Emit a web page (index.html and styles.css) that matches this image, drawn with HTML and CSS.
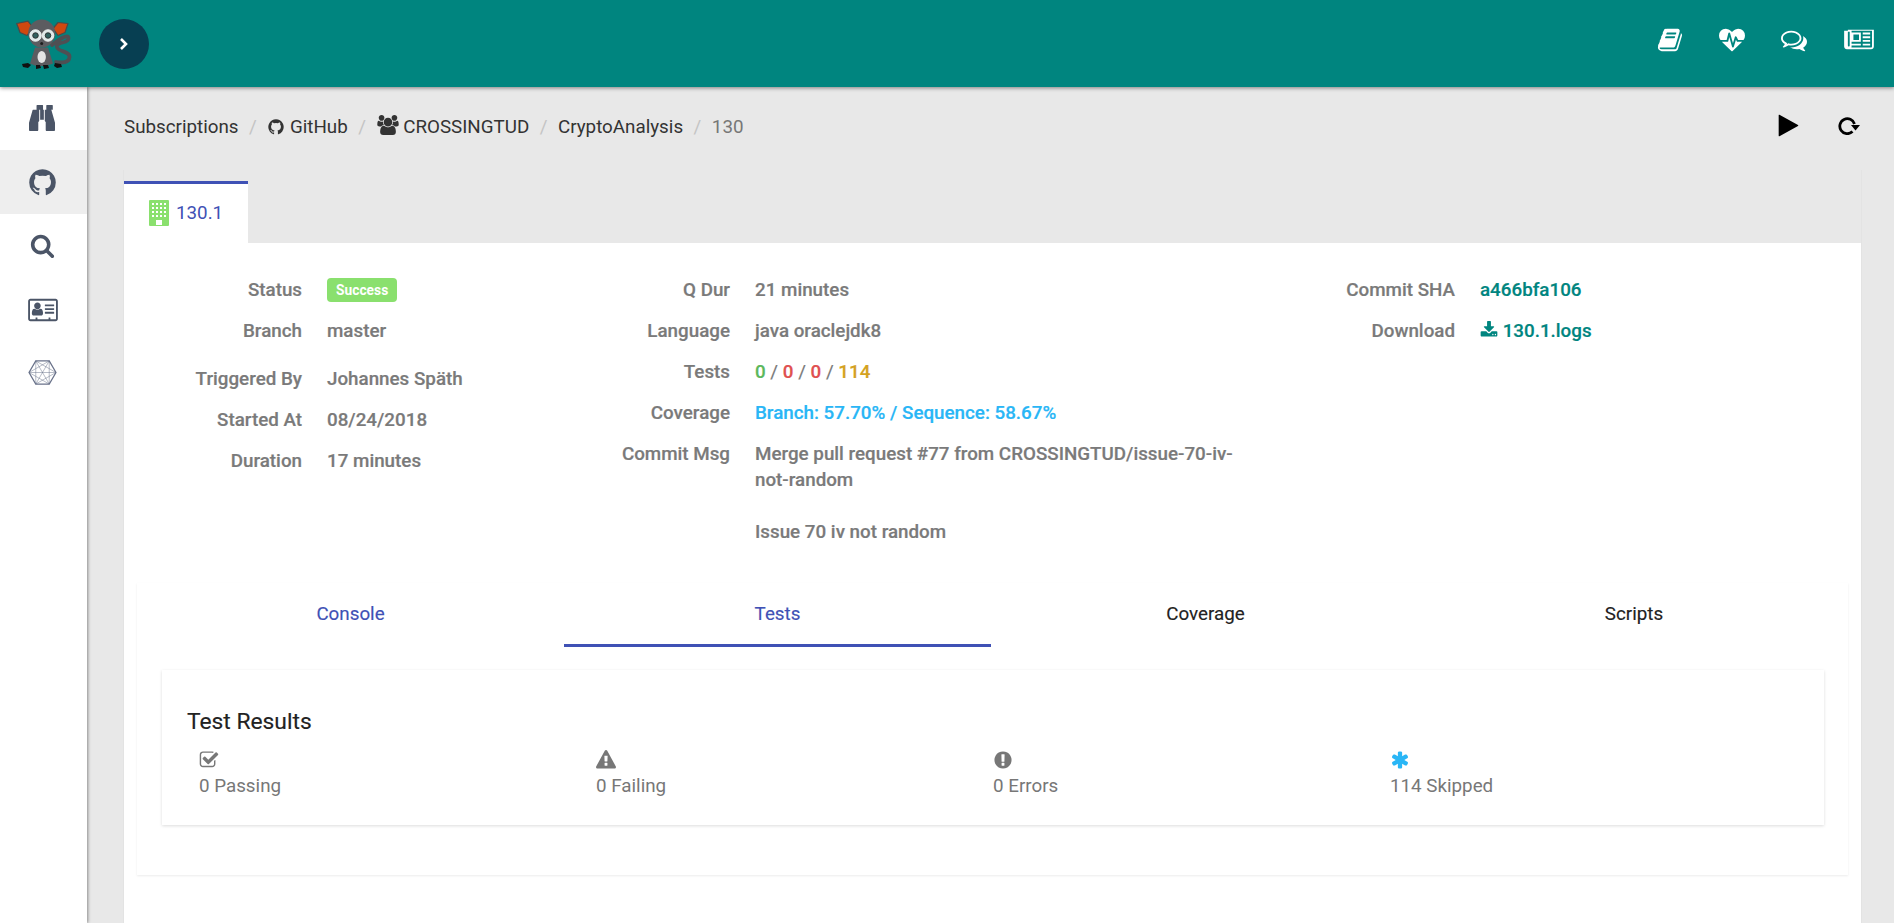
FILE: index.html
```html
<!DOCTYPE html>
<html lang="en">
<head>
<meta charset="utf-8">
<title>130.1</title>
<link rel="stylesheet" href="styles.css">
</head>
<body>
<svg class="defs" aria-hidden="true">
  <symbol id="i-github" viewBox="0 0 1792 1792"><path d="M896 128q209 0 385.5 103t279.5 279.5 103 385.5q0 251-146.5 451.5t-378.5 277.5q-27 5-40-7t-13-30q0-3 .5-76.5t.5-134.5q0-97-52-142 57-6 102.5-18t94-39 81-66.5 53-105 20.5-150.5q0-119-79-206 37-91-8-204-28-9-81 11t-92 44l-38 24q-93-26-192-26t-192 26q-16-11-42.5-27t-83.5-38.5-85-13.5q-45 113-8 204-79 87-79 206 0 85 20.5 150t52.5 105 80.5 67 94 39 102.5 18q-39 36-49 103-21 10-45 15t-57 5-65.5-21.5-55.5-62.5q-19-32-48.5-52t-49.5-24l-20-3q-21 0-29 4.5t-5 11.5 9 14 13 12l7 5q22 10 43.5 38t31.5 51l10 23q13 38 44 61.5t67 30 69.5 7 55.5-3.5l23-4q0 38 .5 88.5t.5 54.5q0 18-13 30t-40 7q-232-77-378.5-277.5t-146.5-451.5q0-209 103-385.5t279.5-279.5 385.5-103z"/></symbol>
  <symbol id="i-users" viewBox="0 0 1920 1792"><path d="M593 896q-162 5-265 128h-134q-82 0-138-40.5t-56-118.5q0-353 124-353 6 0 43.5 21t97.5 42.5 119 21.5q67 0 133-23-5 37-5 66 0 139 81 256zm1071 637q0 120-73 189.5t-194 69.5h-874q-121 0-194-69.5t-73-189.5q0-53 3.5-103.5t14-109 26.5-108.5 43-97.5 62-81 85.5-53.5 111.5-20q10 0 43 21.5t73 48 107 48 135 21.5 135-21.5 107-48 73-48 43-21.5q61 0 111.5 20t85.5 53.5 62 81 43 97.5 26.5 108.5 14 109 3.5 103.5zm-1024-1277q0 106-75 181t-181 75-181-75-75-181 75-181 181-75 181 75 75 181zm704 384q0 159-112.5 271.5t-271.5 112.5-271.5-112.5-112.5-271.5 112.5-271.5 271.5-112.5 271.5 112.5 112.5 271.5zm576 225q0 78-56 118.5t-138 40.5h-134q-103-123-265-128 81-117 81-256 0-29-5-66 66 23 133 23 59 0 119-21.5t97.5-42.5 43.5-21q124 0 124 353zm-128-609q0 106-75 181t-181 75-181-75-75-181 75-181 181-75 181 75 75 181z"/></symbol>
  <symbol id="i-binoculars" viewBox="0 0 1792 1792"><path d="M704 320v768q0 26-19 45t-45 19v576q0 26-19 45t-45 19h-512q-26 0-45-19t-19-45v-512l249-873q7-23 31-23h424zm320 0v704h-256v-704h256zm768 896v512q0 26-19 45t-45 19h-512q-26 0-45-19t-19-45v-576q-26 0-45-19t-19-45v-768h424q24 0 31 23zm-824-1184v288h-448v-288q0-14 9-23t23-9h384q14 0 23 9t9 23zm672 0v288h-448v-288q0-14 9-23t23-9h384q14 0 23 9t9 23z"/></symbol>
  <symbol id="i-search" viewBox="0 0 1792 1792"><path d="M1216 832q0-185-131.5-316.5t-316.5-131.5-316.5 131.5-131.5 316.5 131.5 316.5 316.5 131.5 316.5-131.5 131.5-316.5zm512 832q0 52-38 90t-90 38q-54 0-90-38l-343-342q-179 124-399 124-143 0-273.5-55.5t-225-150-150-225-55.5-273.5 55.5-273.5 150-225 225-150 273.5-55.5 273.5 55.5 225 150 150 225 55.5 273.5q0 220-124 399l343 343q37 37 37 90z"/></symbol>
  <symbol id="i-card" viewBox="0 0 2048 1792"><path d="M1024 1131q0 64-37 106.5t-91 42.5h-512q-54 0-91-42.5t-37-106.5 9-117.5 29.5-103 60.5-78 97-28.5q6 4 30 18t37.5 21.5 35.5 17.5 43 14.5 42 4.5 42-4.5 43-14.5 35.5-17.5 37.5-21.5 30-18q57 0 97 28.5t60.5 78 29.5 103 9 117.5zm-157-520q0 94-66.5 160.5t-160.5 66.5-160.5-66.5-66.5-160.5 66.5-160.5 160.5-66.5 160.5 66.5 66.5 160.5zm925 445v64q0 14-9 23t-23 9h-576q-14 0-23-9t-9-23v-64q0-14 9-23t23-9h576q14 0 23 9t9 23zm0-252v56q0 15-10.5 25.5t-25.5 10.5h-568q-15 0-25.5-10.5t-10.5-25.5v-56q0-15 10.5-25.5t25.5-10.5h568q15 0 25.5 10.5t10.5 25.5zm0-260v64q0 14-9 23t-23 9h-576q-14 0-23-9t-9-23v-64q0-14 9-23t23-9h576q14 0 23 9t9 23zm128 960v-1216q0-13-9.5-22.5t-22.5-9.5h-1728q-13 0-22.5 9.5t-9.5 22.5v1216q0 13 9.5 22.5t22.5 9.5h352v-96q0-14 9-23t23-9h64q14 0 23 9t9 23v96h768v-96q0-14 9-23t23-9h64q14 0 23 9t9 23v96h352q13 0 22.5-9.5t9.5-22.5zm128-1216v1216q0 66-47 113t-113 47h-1728q-66 0-113-47t-47-113v-1216q0-66 47-113t113-47h1728q66 0 113 47t47 113z"/></symbol>
  <symbol id="i-book" viewBox="0 0 1792 1792"><path d="M1703 478q40 57 18 129l-275 906q-19 64-76.5 107.5t-122.5 43.5h-923q-77 0-148.5-53.5t-99.5-131.5q-24-67-2-127 0-4 3-27t4-37q1-8-3-21.5t-3-19.5q2-11 8-21t16.5-23.5 16.5-23.5q23-38 45-91.5t30-91.5q3-10 .5-30t-.5-28q3-11 17-28t17-23q21-36 42-92t25-90q1-9-2.5-32t.5-28q4-13 22-30.5t22-22.5q19-26 42.5-84.5t27.5-96.5q1-8-3-25.5t-2-26.5q2-8 9-18t18-23 17-21q8-12 16.5-30.5t15-35 16-36 19.5-32 26.5-23.5 36-11.5 47.5 5.5l-1 3q38-9 51-9h761q74 0 114 56t18 130l-274 906q-36 119-71.5 153.5t-128.5 34.5h-869q-27 0-38 15-11 16-1 43 24 70 144 70h923q29 0 56-15.5t35-41.5l300-987q7-22 5-57 38 15 59 43zm-1064 2q-4 13 2 22.5t20 9.5h608q13 0 25.5-9.5t16.5-22.5l21-64q4-13-2-22.5t-20-9.5h-608q-13 0-25.5 9.5t-16.5 22.5zm-83 256q-4 13 2 22.5t20 9.5h608q13 0 25.5-9.5t16.5-22.5l21-64q4-13-2-22.5t-20-9.5h-608q-13 0-25.5 9.5t-16.5 22.5z"/></symbol>
  <symbol id="i-heart" viewBox="0 0 1792 1792"><path d="M1280 1024h305q-5 6-10 10.5t-9 7.5l-3 4-623 600q-18 18-44 18t-44-18l-624-602q-5-2-21-20h369q22 0 39.5-13.5t22.5-34.5l70-281 190 667q6 20 23 33t39 13q21 0 38-13t23-33l146-485 56 112q18 35 57 35zm512-428q0 145-103 300h-369l-111-221q-8-17-25.5-27t-36.5-8q-45 5-56 46l-129 430-196-686q-6-20-23.5-33t-39.5-13-39 13.5-22 34.5l-116 464h-423q-103-155-103-300 0-220 127-344t351-124q62 0 126.5 21.5t120 58 95.5 68.5 76 68q36-36 76-68t95.5-68.5 120-58 126.5-21.5q224 0 351 124t127 344z"/></symbol>
  <symbol id="i-comments" viewBox="0 0 1792 1792"><path d="M704 384q-153 0-286 52t-211.5 141-78.5 191q0 82 53 158t149 132l97 56-35 84q34-20 62-39l44-31 53 10q78 14 153 14 153 0 286-52t211.5-141 78.5-191-78.5-191-211.5-141-286-52zm0-128q191 0 353.5 68.5t256.5 186.5 94 257-94 257-256.5 186.5-353.5 68.5q-86 0-176-16-124 88-278 128-36 9-86 16h-3q-11 0-20.5-8t-11.5-21q-1-3-1-6.5t.5-6.5 2-6l2.5-5 3.5-5.5 4-5 4.5-5 4-4.5q5-6 23-25t26-29.5 22.5-29 25-38.5 20.5-44q-124-72-195-177t-71-224q0-139 94-257t256.5-186.5 353.5-68.5zm822 1169q10 24 20.5 44t25 38.5 22.5 29 26 29.5 23 25q1 1 4 4.5t4.5 5 4 5 3.5 5.5l2.5 5 2 6 .5 6.5-1 6.5q-3 14-13 22t-22 7q-50-7-86-16-154-40-278-128-90 16-176 16-271 0-472-132 58 4 88 4 161 0 309-45t264-129q125-92 192-212t67-254q0-77-23-152 129 71 204 178t75 230q0 120-71 224.5t-195 176.5z"/></symbol>
  <symbol id="i-news" viewBox="0 0 2048 1792"><path d="M1024 512h-384v384h384v-384zm128 640v128h-640v-128h640zm0-768v640h-640v-640h640zm640 768v128h-512v-128h512zm0-256v128h-512v-128h512zm0-256v128h-512v-128h512zm0-256v128h-512v-128h512zm128 960v-1088h-1408v1088q0 33-11 64h1355q26 0 45-19t19-45zm-1536-64v-960h-128v960q0 26 19 45t45 19 45-19 19-45zm1664-1088v1152q0 80-56 136t-136 56h-1664q-80 0-136-56t-56-136v-1088h256v-64h1536z"/></symbol>
  <symbol id="i-play" viewBox="0 0 1792 1792"><path d="M1576 927l-1328 738q-23 13-39.5 3t-16.5-36v-1472q0-26 16.5-36t39.5 3l1328 738q23 13 23 31t-23 31z"/></symbol>
  <symbol id="i-download" viewBox="0 0 1792 1792"><path d="M1344 1344q0-26-19-45t-45-19-45 19-19 45 19 45 45 19 45-19 19-45zm256 0q0-26-19-45t-45-19-45 19-19 45 19 45 45 19 45-19 19-45zm128-224v320q0 40-28 68t-68 28h-1472q-40 0-68-28t-28-68v-320q0-40 28-68t68-28h465l135 136q58 56 136 56t136-56l136-136h464q40 0 68 28t28 68zm-325-569q17 41-14 70l-448 448q-18 19-45 19t-45-19l-448-448q-31-29-14-70 17-39 59-39h256v-448q0-26 19-45t45-19h256q26 0 45 19t19 45v448h256q42 0 59 39z"/></symbol>
  <symbol id="i-check" viewBox="0 0 1792 1792"><path d="M1472 930v318q0 119-84.5 203.5t-203.5 84.5h-832q-119 0-203.5-84.5t-84.5-203.5v-832q0-119 84.5-203.5t203.5-84.5h832q63 0 117 25 15 7 18 23 3 17-9 29l-49 49q-10 10-23 10-3 0-9-2-23-6-45-6h-832q-66 0-113 47t-47 113v832q0 66 47 113t113 47h832q66 0 113-47t47-113v-254q0-13 9-22l64-64q10-10 23-10 6 0 12 3 20 8 20 29zm231-489l-814 814q-24 24-57 24t-57-24l-430-430q-24-24-24-57t24-57l110-110q24-24 57-24t57 24l263 263 647-647q24-24 57-24t57 24l110 110q24 24 24 57t-24 57z"/></symbol>
  <symbol id="i-warning" viewBox="0 0 1792 1792"><path d="M1024 1375v-190q0-14-9.5-23.5t-22.5-9.5h-192q-13 0-22.5 9.5t-9.5 23.5v190q0 14 9.5 23.5t22.5 9.5h192q13 0 22.5-9.5t9.5-23.5zm-2-374l18-459q0-12-10-19-13-11-24-11h-220q-11 0-24 11-10 7-10 21l17 457q0 10 10 16.5t24 6.5h185q14 0 23.5-6.5t10.5-16.5zm-14-934l768 1408q35 63-2 126-17 29-46.5 46t-63.5 17h-1536q-34 0-63.5-17t-46.5-46q-37-63-2-126l768-1408q17-31 47-49t65-18 65 18 47 49z"/></symbol>
  <symbol id="i-error" viewBox="0 0 1792 1792"><path d="M896 128q209 0 385.5 103t279.5 279.5 103 385.5-103 385.5-279.5 279.5-385.5 103-385.5-103-279.5-279.5-103-385.5 103-385.5 279.5-279.5 385.5-103zm128 1247v-190q0-14-9-23.5t-22-9.5h-192q-13 0-23 10t-10 23v190q0 13 10 23t23 10h192q13 0 22-9.5t9-23.5zm-2-344l18-621q0-12-10-18-10-8-24-8h-220q-14 0-24 8-10 6-10 18l17 621q0 10 10 17.5t24 7.5h185q14 0 23.5-7.5t10.5-17.5z"/></symbol>
  <symbol id="i-asterisk" viewBox="0 0 1792 1792"><path d="M1546 1050q46 26 59.5 77.5t-12.5 97.5l-64 110q-26 46-77.5 59.5t-97.5-12.5l-266-153v307q0 52-38 90t-90 38h-128q-52 0-90-38t-38-90v-307l-266 153q-46 26-97.5 12.5t-77.5-59.5l-64-110q-26-46-12.5-97.5t59.5-77.5l266-154-266-154q-46-26-59.5-77.5t12.5-97.5l64-110q26-46 77.5-59.5t97.5 12.5l266 153v-307q0-52 38-90t90-38h128q52 0 90 38t38 90v307l266-153q46-26 97.5-12.5t77.5 59.5l64 110q26 46 12.5 97.5t-59.5 77.5l-266 154z"/></symbol>
</svg>

<header class="topbar">
  <div class="brand">
    <svg class="logo" viewBox="0 0 56 52" aria-label="Logo">
      <path class="logo-tail" d="M36 27C42 22 52 15 52.5 20C53 26 40 23 41 29C42 34 54 33 53.5 39C53 45 46 45 40 44"/>
      <path class="logo-ear" d="M.7 5.5L12 3.2 17 9.5 11 17.5 4 14.5z"/>
      <path class="logo-ear" d="M52 5.5L42 4.5 37 10.5 42 17.5 49 14.5z"/>
      <path class="logo-fur" d="M19 29.5H32L37 45.5 30 48H20L14 45.5z"/>
      <ellipse class="logo-fur" cx="25.7" cy="15.5" rx="13.5" ry="14"/>
      <ellipse class="logo-belly" cx="25.7" cy="39" rx="4.2" ry="6"/>
      <circle class="logo-eye" cx="19.5" cy="17.5" r="5.8"/>
      <circle class="logo-eye" cx="32" cy="17.5" r="5.8"/>
      <circle class="logo-pupil" cx="19.5" cy="17.5" r="2.8"/>
      <circle class="logo-pupil" cx="32" cy="17.5" r="2.8"/>
      <circle class="logo-nose" cx="25.7" cy="25.5" r="1.5"/>
      <path class="logo-foot" d="M6 46l6-1 3 2-3 3-5-1zM20 47l4 0 1 3-5 1zM27 47l5 0 1 3-5 1zM39 45l6 1 1 3-5 1-3-2z"/>
    </svg>
    <button class="toggle" type="button" aria-label="Expand">
      <svg class="toggle-icon" viewBox="0 0 12 14"><path d="M3 2l5 5-5 5"/></svg>
    </button>
  </div>
  <nav class="top-icons">
    <svg class="ico top-ic"><use href="#i-book"/></svg>
    <svg class="ico top-ic"><use href="#i-heart"/></svg>
    <svg class="ico top-ic"><use href="#i-comments"/></svg>
    <svg class="ico top-news"><use href="#i-news"/></svg>
  </nav>
</header>

<div class="shell">
  <aside class="sidebar">
    <a class="side-item"><svg class="ico side-bino"><use href="#i-binoculars"/></svg></a>
    <a class="side-item active"><svg class="ico side-git"><use href="#i-github"/></svg></a>
    <a class="side-item"><svg class="ico side-search"><use href="#i-search"/></svg></a>
    <a class="side-item"><svg class="ico side-card"><use href="#i-card"/></svg></a>
    <a class="side-item">
      <svg class="hex" viewBox="0 0 30 26">
        <path d="M8 1h14l7 12-7 12H8L1 13z"/>
        <path class="hex-thin" d="M8 1l21 12M8 1l14 24M8 1v24M22 1v24M22 1L8 25M22 1L1 13M29 13L8 25M29 13H1M22 25L1 13"/>
      </svg>
    </a>
  </aside>

  <main class="main">
    <div class="crumbbar">
      <ol class="crumbs">
        <li>Subscriptions</li>
        <li class="sep">/</li>
        <li><svg class="ico crumb-ico"><use href="#i-github"/></svg> GitHub</li>
        <li class="sep">/</li>
        <li><svg class="ico crumb-users"><use href="#i-users"/></svg> CROSSINGTUD</li>
        <li class="sep">/</li>
        <li>CryptoAnalysis</li>
        <li class="sep">/</li>
        <li class="current">130</li>
      </ol>
      <div class="actions">
        <svg class="ico act-play"><use href="#i-play"/></svg>
        <svg class="act-redo" viewBox="0 0 22 18"><path class="redo-arc" d="M16.5 7A7.5 7.5 0 1 0 14.5 14.6"/><path class="redo-head" d="M13 8h9l-4.5 5.5z"/></svg>
      </div>
    </div>

    <div class="sheet">
      <div class="job-tabs">
        <div class="job-tab">
          <svg class="building" viewBox="0 0 20 26">
            <rect class="building-body" width="20" height="26" rx="1"/>
            <path class="building-win" d="M3 3h2v2H3zM7 3h2v2H7zM11 3h2v2h-2zM15 3h2v2h-2zM3 7h2v2H3zM7 7h2v2H7zM11 7h2v2h-2zM15 7h2v2h-2zM3 11h2v2H3zM7 11h2v2H7zM11 11h2v2h-2zM15 11h2v2h-2zM3 15h2v2H3zM7 15h2v2H7zM11 15h2v2h-2zM15 15h2v2h-2zM7 20h6v5H7z"/>
          </svg>
          <span>130.1</span>
        </div>
      </div>

      <section class="card">
        <div class="info">
          <dl class="info-col col-a">
            <dt>Status</dt><dd><span class="badge">Success</span></dd>
            <dt class="tall">Branch</dt><dd class="tall">master</dd>
            <dt>Triggered By</dt><dd>Johannes Späth</dd>
            <dt>Started At</dt><dd>08/24/2018</dd>
            <dt>Duration</dt><dd>17 minutes</dd>
          </dl>
          <dl class="info-col col-b">
            <dt>Q Dur</dt><dd>21 minutes</dd>
            <dt>Language</dt><dd>java oraclejdk8</dd>
            <dt>Tests</dt><dd><span class="t-pass">0</span> <span class="t-sep">/</span> <span class="t-fail">0</span> <span class="t-sep">/</span> <span class="t-fail">0</span> <span class="t-sep">/</span> <span class="t-skip">114</span></dd>
            <dt>Coverage</dt><dd class="t-cov">Branch: 57.70% / Sequence: 58.67%</dd>
            <dt>Commit Msg</dt><dd class="msg"><p>Merge pull request #77 from CROSSINGTUD/issue-70-iv-not-random</p><p>Issue 70 iv not random</p></dd>
          </dl>
          <dl class="info-col col-c">
            <dt>Commit SHA</dt><dd class="link">a466bfa106</dd>
            <dt>Download</dt><dd class="link"><svg class="ico dl-ico"><use href="#i-download"/></svg> 130.1.logs</dd>
          </dl>
        </div>

        <div class="panel">
          <div class="sub-tabs">
            <a class="sub-tab blue">Console</a>
            <a class="sub-tab blue selected">Tests</a>
            <a class="sub-tab">Coverage</a>
            <a class="sub-tab">Scripts</a>
          </div>
          <div class="results">
            <h2 class="results-title">Test Results</h2>
            <div class="results-row">
              <div class="result"><svg class="ico res-ico"><use href="#i-check"/></svg><span>0 Passing</span></div>
              <div class="result"><svg class="ico res-ico"><use href="#i-warning"/></svg><span>0 Failing</span></div>
              <div class="result"><svg class="ico res-ico"><use href="#i-error"/></svg><span>0 Errors</span></div>
              <div class="result"><svg class="ico res-ico sky"><use href="#i-asterisk"/></svg><span>114 Skipped</span></div>
            </div>
          </div>
        </div>
      </section>
    </div>
  </main>
</div>
</body>
</html>
```
FILE: styles.css
```css
* { box-sizing: border-box; }
html, body { margin: 0; height: 100%; overflow: hidden; }
body {
  font-family: Roboto, "Liberation Sans", sans-serif;
  font-size: 18.8px;
  line-height: 27px;
  background: #e8e8e8;
  color: #333;
  display: flex;
  flex-direction: column;
}
.defs { width: 0; height: 0; position: absolute; }
.ico { fill: currentColor; display: inline-block; flex: none; }

.topbar {
  height: 87px;
  flex: none;
  background: #00857f;
  box-shadow: 0 1px 4px rgba(0,0,0,.45);
  display: flex;
  align-items: center;
  justify-content: space-between;
  padding: 0 20px 0 16px;
  position: relative;
  z-index: 3;
}
.brand { display: flex; align-items: center; }
.logo { width: 56px; height: 52px; margin-right: 27px; }
.logo-tail { fill: none; stroke: #4f4f53; stroke-width: 3.8; stroke-linecap: round; }
.logo-ear { fill: #d0480f; stroke: #4a4a4a; stroke-width: 1.2; stroke-linejoin: round; }
.logo-fur { fill: #5c5c60; }
.logo-belly { fill: #e4e4e4; }
.logo-eye { fill: #dfe8e8; stroke: #fff; stroke-width: .8; }
.logo-pupil { fill: #33605f; stroke: #222; stroke-width: .8; }
.logo-nose { fill: #1e1e1e; }
.logo-foot { fill: #111; }
.toggle {
  width: 50px; height: 50px; border-radius: 50%;
  border: 0; padding: 0;
  background: #073f52;
  display: flex; align-items: center; justify-content: center;
}
.toggle-icon { width: 12px; height: 14px; fill: none; stroke: #fff; stroke-width: 2.6; }

.top-icons { display: flex; align-items: center; color: #fff; gap: 36px; margin-bottom: 7px; }
.top-ic { width: 26px; height: 26px; }
.top-news { width: 30px; height: 26px; margin-left: 1px; }

.shell { flex: 1; display: flex; min-height: 0; }
.sidebar {
  width: 87px; flex: none;
  background: #fff;
  box-shadow: 1px 0 3px rgba(0,0,0,.4);
  position: relative;
  z-index: 2;
}
.side-item {
  height: 64px;
  padding-right: 2px;
  display: flex; align-items: center; justify-content: center;
  color: #4b5567;
}
.side-item:first-child { height: 63px; }
.side-item.active { background: #eee; }
.side-bino { width: 26px; height: 26px; margin: 0 1px 2px 0; }
.side-git { width: 31px; height: 31px; }
.side-search { width: 25px; height: 25px; margin: 0 1px 2px 0; }
.side-card { width: 30px; height: 26px; }
.hex { width: 29px; height: 25px; fill: none; stroke: #69728a; stroke-width: 1.3; margin-bottom: 3px; }
.hex-thin { stroke-width: .5; }

.main { flex: 1; display: flex; flex-direction: column; padding: 0 33px 0 37px; min-width: 0; }
.crumbbar { height: 83px; flex: none; display: flex; align-items: flex-start; justify-content: space-between; padding-top: 27px; }
.crumbs { list-style: none; margin: 0; padding: 0; display: flex; gap: 10.5px; color: #333; }
.crumbs .sep { color: #c4c4c4; }
.crumbs .current { color: #777; }
.crumb-ico { width: 18px; height: 18px; vertical-align: -3px; }
.crumb-users { width: 22px; height: 20px; vertical-align: -2px; }
.actions { display: flex; align-items: center; gap: 37px; color: #000; margin: -1px 1px 0 0; }
.act-play { width: 25px; height: 25px; }
.act-redo { width: 22px; height: 18px; }
.redo-arc { fill: none; stroke: #000; stroke-width: 2.8; }
.redo-head { fill: #000; }

.sheet {
  flex: 1;
  min-height: 0;
  margin: 0 -1px;
  border-left: 1px solid #e3e3e3;
  border-right: 1px solid #e3e3e3;
  display: flex;
  flex-direction: column;
}
.job-tabs { height: 73px; flex: none; padding-top: 11px; display: flex; }
.job-tab {
  width: 124px;
  background: #fff;
  border-top: 3px solid #3f51b5;
  display: flex; align-items: center;
  padding: 0 0 1px 25px;
  gap: 7px;
  color: #3f51b5;
}
.building { width: 20px; height: 26px; }
.building-body { fill: #8ae06e; }
.building-win { fill: #fff; }

.card { flex: 1; min-height: 0; background: #fff; padding-top: 34px; }
.info { display: flex; font-weight: 500; color: #7a7a7a; height: 306px; -webkit-text-stroke: .2px; }
.info-col {
  margin: 0;
  display: grid;
  grid-template-columns: 178px 1fr;
  column-gap: 25px;
  row-gap: 14px;
  align-content: start;
}
.col-a { width: 428px; }
.col-b { width: 725px; }
.col-c { flex: 1; }
dt { text-align: right; }
dd { margin: 0; }
dt.tall, dd.tall { padding-bottom: 7px; }
.badge {
  display: inline-block;
  background: #8ae06e;
  color: #fff;
  font-size: 13.8px;
  line-height: 24px;
  height: 24px;
  padding: 0 9px;
  border-radius: 4px;
  font-weight: 700;
  vertical-align: top;
  margin-top: 1px;
  -webkit-text-stroke: 0;
}
.t-pass { color: #5cb85c; }
.t-fail { color: #e05050; }
.t-skip { color: #d4a21f; }
.t-sep { font-weight: 400; }
.t-cov { color: #29b6f6; }
.msg { max-width: 500px; line-height: 26px; }
.msg p { margin: 0 0 26px; }
.link { color: #00857f; }
.dl-ico { width: 18px; height: 18px; vertical-align: -2px; }

.panel {
  margin: 0 13px;
  height: 292px;
  box-shadow: 0 1px 2px rgba(0,0,0,.08);
  padding: 0 24px 0 25px;
}
.sub-tabs { display: flex; height: 64px; margin: 0 -24px 0 -25px; }
.sub-tab {
  flex: 0 0 427px;
  display: flex; align-items: center; justify-content: center;
  font-weight: 400;
  color: #222;
  border-bottom: 3px solid transparent;
  padding-top: 1px;
  -webkit-text-stroke: .15px;
}
.sub-tab:nth-child(3) { flex-basis: 429px; }
.sub-tab:last-child { flex: 1; }
.sub-tab.blue { color: #3f51b5; }
.sub-tab.selected { border-bottom-color: #3f51b5; }
.results {
  margin-top: 23px;
  height: 155px;
  padding: 34px 25px 0;
  box-shadow: 0 1px 3px rgba(0,0,0,.14);
}
.results-title { margin: 0; font-weight: 400; font-size: 22.8px; line-height: 36px; color: #222; -webkit-text-stroke: .15px; }
.results-row { display: flex; padding-left: 12px; margin-top: 10px; color: #777; }
.result { width: 397px; display: flex; flex-direction: column; align-items: flex-start; }
.res-ico { width: 20px; height: 20px; margin-bottom: 3px; }
.sky { color: #29b6f6; }
```
